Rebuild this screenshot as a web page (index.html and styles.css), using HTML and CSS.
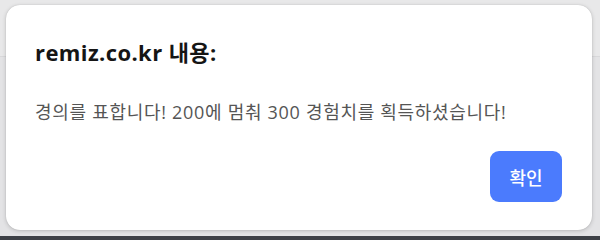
FILE: index.html
```html
<!DOCTYPE html>
<html lang="ko">
<head>
<meta charset="utf-8">
<link rel="stylesheet" href="styles.css">
</head>
<body>
<div class="page">
  <div class="page-top"></div>
  <div class="page-rest"></div>
  <div class="taskbar"></div>
</div>
<div class="dialog">
  <h1 class="title">remiz.co.kr 내용:</h1>
  <p class="message">경의를 표합니다! 200에 멈춰 300 경험치를 획득하셨습니다!</p>
  <div class="actions">
    <button class="ok">확인</button>
  </div>
</div>
</body>
</html>
```
FILE: styles.css
```css
* { box-sizing: border-box; }
html, body {
  margin: 0;
  padding: 0;
  width: 600px;
  height: 240px;
  overflow: hidden;
  font-family: "Open Sans", "Noto Sans CJK KR", sans-serif;
}
.page {
  width: 600px;
  height: 240px;
  display: flex;
  flex-direction: column;
  background: #e6e6e7;
}
.page-top {
  height: 57px;
  background: #e8e8e9;
  border-bottom: 1px solid #d8d8da;
}
.page-rest {
  flex: 1;
  background: #e3e3e5;
}
.taskbar {
  height: 4px;
  background: #3d4046;
}
.dialog {
  position: absolute;
  left: 6px;
  top: 5px;
  width: 586px;
  height: 225px;
  background: #fff;
  border-radius: 14px;
  box-shadow: 0 1px 4px rgba(0,0,0,0.18), 0 0 1px rgba(0,0,0,0.2);
  padding: 32px 30px 28px 29px;
  display: flex;
  flex-direction: column;
}
.title {
  margin: 0;
  font-size: 22px;
  line-height: 30px;
  font-weight: 700;
  color: #151515;
  letter-spacing: 0.4px;
}
.message {
  margin: 32px 0 0 0;
  font-size: 18px;
  line-height: 26px;
  color: #555;
  letter-spacing: 0.7px;
}
.actions {
  margin-top: auto;
  display: flex;
  justify-content: flex-end;
}
.ok {
  width: 72px;
  height: 51px;
  border: none;
  border-radius: 9px;
  background: #4b7bfd;
  color: #fff;
  font-family: "Open Sans", "Noto Sans CJK KR", sans-serif;
  font-size: 18px;
  font-weight: 500;
  padding: 0;
}
```
